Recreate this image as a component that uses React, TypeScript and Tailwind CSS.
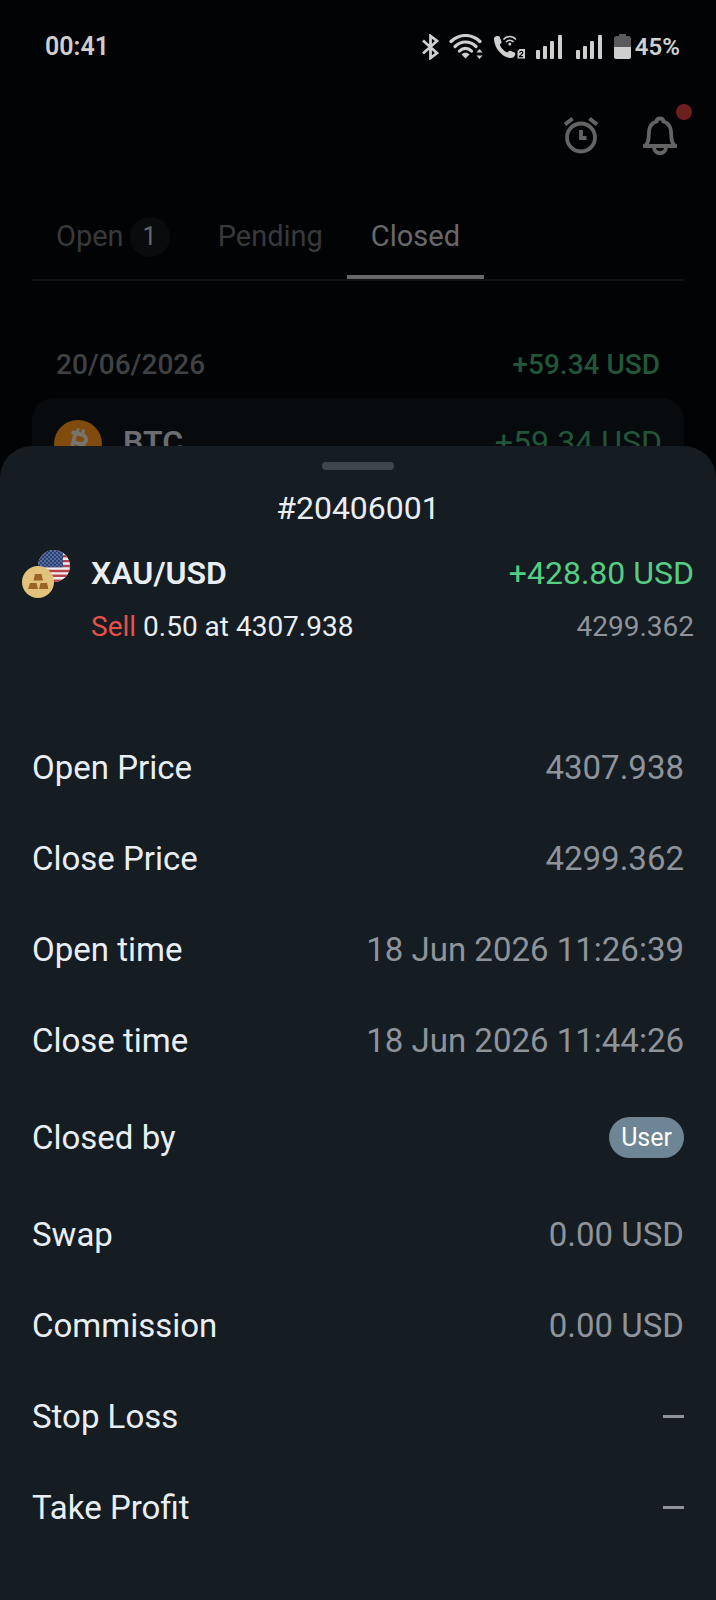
import type { ReactNode } from 'react'

const details: { label: string; value: ReactNode }[] = [
    { label: 'Open Price', value: '4307.938' },
    { label: 'Close Price', value: '4299.362' },
    { label: 'Open time', value: '18 Jun 2026 11:26:39' },
    { label: 'Close time', value: '18 Jun 2026 11:44:26' },
    { label: 'Closed by', value: <UserBadge /> },
    { label: 'Swap', value: '0.00 USD' },
    { label: 'Commission', value: '0.00 USD' },
    { label: 'Stop Loss', value: <Dash /> },
    { label: 'Take Profit', value: <Dash /> },
]

function UserBadge() {
    return <span className="my-1 flex h-[41px] items-center rounded-full bg-[#6d8594] px-3 text-[25px] text-white">User</span>
}

function Dash() {
    return <span role="img" aria-label="not set" className="block h-[3px] w-[21px] bg-[#8f939a]" />
}

function Signal() {
    return (
        <svg className="h-[26px] w-[26px]" viewBox="0 0 26 26" fill="currentColor" aria-hidden="true">
            <rect x="0" y="16" width="4" height="9" rx="1" />
            <rect x="7" y="12" width="4" height="13" rx="1" />
            <rect x="14" y="7" width="4" height="18" rx="1" />
            <rect x="22" y="1" width="4" height="24" rx="1" />
        </svg>
    )
}

function StatusBar() {
    return (
        <div className="flex h-[92px] items-center justify-between pl-[45px] pr-9 pt-0.5 text-[#cfcfd0]">
            <span className="text-[25px] font-semibold">00:41</span>
            <div className="flex items-center gap-[10px]">
                <svg className="h-[26px] w-[18px]" viewBox="0 0 18 26" fill="none" stroke="currentColor" strokeWidth="2.8" aria-hidden="true">
                    <path d="M2 6.500l14 12.500-6.500 5V2L16 7 2 19.500" />
                </svg>
                <svg className="h-[26px] w-[34px]" viewBox="0 0 34 26" fill="none" stroke="currentColor" strokeWidth="3.200" strokeLinecap="round" aria-hidden="true">
                    <path d="M2 7.500C10.500-.500 22.500-.500 31 7.500" />
                    <path d="M6 12.500c6-6 15-6 21 0" />
                    <path d="M10.500 17c3.500-3.600 8.500-3.600 12 0" />
                    <path d="M16.500 24.500l-4-4c2-2.400 6-2.400 8 0z" fill="currentColor" stroke="none" />
                    <path d="M27.500 18.500L30.500 15l3 3.500zM27.500 21.500l3 3.500 3-3.500z" fill="currentColor" stroke="none" />
                </svg>
                <svg className="h-[26px] w-[33px]" viewBox="0 0 33 26" fill="none" aria-hidden="true">
                    <path d="M1 4c1.500-2 4-2.500 5.500-1.500l2 5c.3 1-.2 1.700-1.700 3.200C8 14 11 17 14.200 18.600c1.500-1.700 2.300-2.100 3.300-1.800l4 1.600c1 .6.900 1.400.6 2.600-.6 2-2.300 3-4.300 3C9 24 .5 13 1 4z" fill="currentColor" />
                    <path d="M10.500 5.500c3.500-4 9-4 12.500 0M13 8c2-2.400 5.500-2.400 7.500 0" stroke="currentColor" strokeWidth="1.500" />
                    <circle cx="16.800" cy="10" r="1.500" fill="currentColor" />
                    <path d="M26.500 15H32v9.500h-7.500V17z" fill="currentColor" />
                    <path d="M26.500 18.500c.5-1.600 3.300-1.500 3.300.2 0 1.500-3 2.300-3.300 4h3.500" stroke="#020305" strokeWidth="1.200" />
                </svg>
                <Signal />
                <span className="ml-1"><Signal /></span>
                <div className="ml-0.5 flex items-center gap-1">
                    <svg className="h-[26px] w-[17px]" viewBox="0 0 17 26" aria-hidden="true">
                        <path d="M5 0h7v2h3q2 0 2 2.500V13H0V4.500Q0 2 2 2h3z" fill="#5a5a5c" />
                        <path d="M0 13h17v10q0 2-2 2H2q-2 0-2-2z" fill="currentColor" />
                    </svg>
                    <span className="text-[24px] font-semibold">45%</span>
                </div>
            </div>
        </div>
    )
}

function Toolbar() {
    return (
        <div className="flex h-[88px] items-center justify-end gap-[43px] pr-[38px] text-[#646465]">
            <button type="button" aria-label="Price alerts">
                <svg className="h-10 w-9" viewBox="0 0 36 40" fill="none" stroke="currentColor" strokeWidth="3.800" aria-hidden="true">
                    <circle cx="18" cy="21.500" r="14" />
                    <path d="M18 14v8h5.500" />
                    <path d="M2 8.500l7.500-6M34 8.500l-7.500-6" strokeWidth="4" />
                </svg>
            </button>
            <button type="button" aria-label="Notifications" className="relative">
                <svg className="h-10 w-9" viewBox="0 0 36 40" fill="none" stroke="currentColor" strokeWidth="3.800" aria-hidden="true">
                    <path d="M1 30h34" />
                    <path d="M3.500 29.500C7 26.500 6.500 22 7 15.500 7.500 9.500 11 6.500 14.500 5.500 15 1.500 21 1.500 21.500 5.500 25 6.500 28.500 9.500 29 15.500c.5 6.500 0 11 3.500 14" />
                    <path d="M12 31.500c.5 7.500 11.500 7.500 12 0" />
                </svg>
                <span className="absolute -right-[14px] -top-3 size-4 rounded-full bg-[#6d201d]" />
            </button>
        </div>
    )
}

function Tabs() {
    return (
        <div role="tablist" className="mx-8 flex h-[101px] border-b-2 border-[#101113] text-[29px] text-[#38393b]">
            <button type="button" role="tab" aria-selected="false" className="flex items-center gap-1.5 px-6 pt-[14px]">
                Open
                <span className="flex size-10 items-center justify-center rounded-full bg-[#0a0b0d] text-[25px] text-[#66676a]">1</span>
            </button>
            <button type="button" role="tab" aria-selected="false" className="px-6 pt-[14px]">Pending</button>
            <button type="button" role="tab" aria-selected="true" className="border-b-4 border-[#68686a] px-6 pt-[18px] text-[#68686a]">Closed</button>
        </div>
    )
}

function BitcoinIcon() {
    return (
        <svg className="size-12" viewBox="0 0 48 48" aria-hidden="true">
            <circle cx="24" cy="24" r="24" fill="#804b0c" />
            <g transform="rotate(14 24 24)" fill="none" stroke="#77736d" strokeWidth="4">
                <path d="M15 14h10c8 0 8 9.500 0 9.500h-6M19 14v20M25 23.500c10 0 10 10.500 0 10.500H15" />
                <path d="M20.500 8.500v5M26 8.500v5M20.500 34v5M26 34v5" strokeWidth="3" />
            </g>
        </svg>
    )
}

function GoldDollarIcon() {
    return (
        <svg className="size-12 shrink-0" viewBox="0 0 48 48" aria-hidden="true">
            <defs>
                <clipPath id="flag"><circle cx="32" cy="16" r="16" /></clipPath>
                <pattern id="stars" width="4" height="4" patternUnits="userSpaceOnUse">
                    <circle cx="1" cy="1" r=".7" fill="#a9b6d6" />
                    <circle cx="3" cy="3" r=".7" fill="#a9b6d6" />
                </pattern>
            </defs>
            <g clipPath="url(#flag)">
                <path d="M16 0h32v32H16z" fill="#f0eef0" />
                <path d="M16 1.300h32M16 6.200h32M16 11.100h32M16 16h32M16 20.900h32M16 25.800h32M16 30.700h32" stroke="#b8434f" strokeWidth="2.450" />
                <path d="M16 0h25v17.200H16z" fill="#2b4179" />
                <path d="M16 0h25v17.200H16z" fill="url(#stars)" />
            </g>
            <circle cx="16" cy="32" r="16" fill="#e3c37c" />
            <path d="M13 24h6.500l1.500 6.500h-9.500zM8 33h6.500l1.500 6H6zM18.500 33H25l1.500 6H17z" fill="#9a6424" />
        </svg>
    )
}

function History() {
    return (
        <div className="px-8">
            <div className="flex items-center justify-between px-6 pb-[13px] pt-16 text-[28px] font-medium leading-10">
                <h2 className="text-[#404143]">20/06/2026</h2>
                <span className="text-[#22563a]">+59.34 USD</span>
            </div>
            <div className="flex gap-[21px] rounded-[22px] bg-[#080b0e] px-[22px] pb-6 pt-[22px] text-[32px] leading-[44px]">
                <BitcoinIcon />
                <span className="font-semibold text-[#6b6d70]">BTC</span>
                <span className="ml-auto text-[#22563a]">+59.34 USD</span>
            </div>
        </div>
    )
}

function OrderSheet() {
    return (
        <section role="dialog" aria-labelledby="order-id" className="relative -mt-8 flex-1 rounded-t-[32px] bg-[#151c22] pb-10 pt-4 text-[#e9eef4]">
            <div className="mx-auto h-2 w-[72px] rounded-full bg-[#40464e]" />
            <h1 id="order-id" className="mt-5 text-center text-[32px] leading-9">#20406001</h1>
            <div className="flex gap-[21px] px-[22px] pt-6">
                <GoldDollarIcon />
                <div className="flex-1">
                    <div className="flex justify-between text-[32px] leading-[46px]">
                        <span className="font-semibold">XAU/USD</span>
                        <span className="text-[#55cd83]">+428.80 USD</span>
                    </div>
                    <div className="mt-3 flex justify-between text-[28px] leading-[38px]">
                        <span><span className="text-[#e8504a]">Sell</span> 0.50 at 4307.938</span>
                        <span className="text-[#8f939a]">4299.362</span>
                    </div>
                </div>
            </div>
            <dl className="mt-[76px] px-8 text-[33px] leading-[37px]">
                {details.map(d => (
                    <div key={d.label} className="flex items-center justify-between py-[27px]">
                        <dt>{d.label}</dt>
                        <dd className="text-[#8f939a]">{d.value}</dd>
                    </div>
                ))}
            </dl>
        </section>
    )
}

export default function App() {
    return (
        <div className="flex min-h-screen flex-col bg-[#020305] font-[Roboto,sans-serif]">
            <div className="h-[478px] overflow-hidden">
                <StatusBar />
                <Toolbar />
                <Tabs />
                <History />
            </div>
            <OrderSheet />
        </div>
    )
}
